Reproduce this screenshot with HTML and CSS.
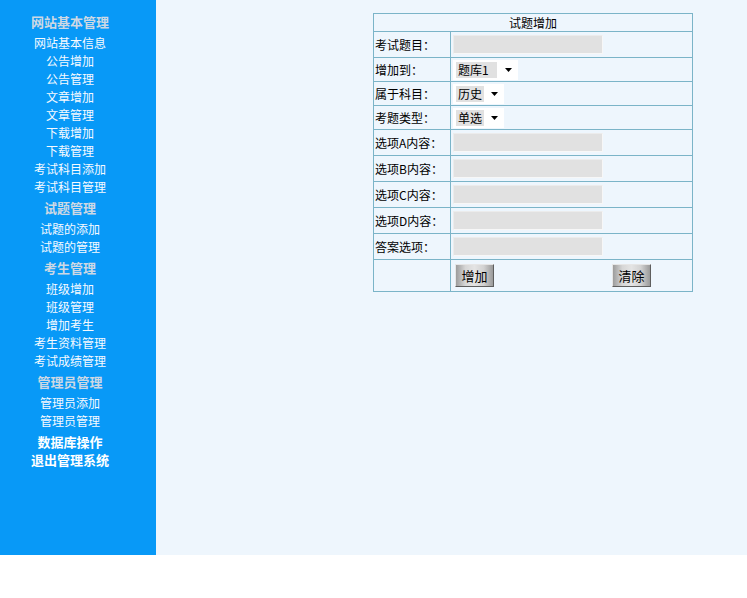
FILE: index.html
```html
<!DOCTYPE html>
<html lang="zh-CN">
<head>
<meta charset="utf-8">
<title>试题增加</title>
<link rel="stylesheet" href="styles.css">
</head>
<body>
<div class="page">
  <aside class="sidebar">
    <nav class="menu">
      <div class="menu-head">网站基本管理</div>
      <a class="menu-item">网站基本信息</a>
      <a class="menu-item">公告增加</a>
      <a class="menu-item">公告管理</a>
      <a class="menu-item">文章增加</a>
      <a class="menu-item">文章管理</a>
      <a class="menu-item">下载增加</a>
      <a class="menu-item">下载管理</a>
      <a class="menu-item">考试科目添加</a>
      <a class="menu-item">考试科目管理</a>
      <div class="menu-head">试题管理</div>
      <a class="menu-item">试题的添加</a>
      <a class="menu-item">试题的管理</a>
      <div class="menu-head">考生管理</div>
      <a class="menu-item">班级增加</a>
      <a class="menu-item">班级管理</a>
      <a class="menu-item">增加考生</a>
      <a class="menu-item">考生资料管理</a>
      <a class="menu-item">考试成绩管理</a>
      <div class="menu-head">管理员管理</div>
      <a class="menu-item">管理员添加</a>
      <a class="menu-item">管理员管理</a>
      <a class="menu-strong menu-gap">数据库操作</a>
      <a class="menu-strong">退出管理系统</a>
    </nav>
  </aside>
  <main class="main">
    <table class="form-table">
      <tr class="row-head"><th colspan="2">试题增加</th></tr>
      <tr class="row-in"><td class="label">考试题目：</td><td class="value"><span class="field"></span></td></tr>
      <tr class="row-sel"><td class="label">增加到：</td><td class="value"><span class="sel sel-wide"><span class="sel-val">题库1</span><svg class="arrow" width="7" height="4" viewBox="0 0 7 4"><path d="M0 0H7L3.5 4Z" fill="#000"/></svg></span></td></tr>
      <tr class="row-sel"><td class="label">属于科目：</td><td class="value"><span class="sel"><span class="sel-val">历史</span><svg class="arrow" width="7" height="4" viewBox="0 0 7 4"><path d="M0 0H7L3.5 4Z" fill="#000"/></svg></span></td></tr>
      <tr class="row-sel"><td class="label">考题类型：</td><td class="value"><span class="sel"><span class="sel-val">单选</span><svg class="arrow" width="7" height="4" viewBox="0 0 7 4"><path d="M0 0H7L3.5 4Z" fill="#000"/></svg></span></td></tr>
      <tr class="row-in"><td class="label">选项A内容：</td><td class="value"><span class="field"></span></td></tr>
      <tr class="row-in"><td class="label">选项B内容：</td><td class="value"><span class="field"></span></td></tr>
      <tr class="row-in"><td class="label">选项C内容：</td><td class="value"><span class="field"></span></td></tr>
      <tr class="row-in"><td class="label">选项D内容：</td><td class="value"><span class="field"></span></td></tr>
      <tr class="row-in"><td class="label">答案选项：</td><td class="value"><span class="field"></span></td></tr>
      <tr class="row-btn"><td class="label"></td><td class="value"><div class="btns"><button class="btn">增加</button><button class="btn">清除</button></div></td></tr>
    </table>
  </main>
</div>
</body>
</html>
```

FILE: styles.css
```css
html, body {
  margin: 0;
  padding: 0;
  background: #ffffff;
  font-family: "Noto Sans CJK SC", "Noto Sans", sans-serif;
  font-size: 12px;
}

.page {
  display: flex;
  height: 555px;
}

.sidebar {
  width: 156px;
  flex: none;
  background: #0899f7;
  padding-top: 10px;
  box-sizing: border-box;
}

.menu {
  width: 140px;
  display: flex;
  flex-direction: column;
  align-items: center;
}

.menu-head {
  height: 24px;
  line-height: 24px;
  font-size: 13px;
  font-weight: bold;
  color: #cdd8e4;
}

.menu-item {
  height: 18px;
  line-height: 18px;
  font-size: 12px;
  color: #f6faff;
  cursor: pointer;
}

.menu-strong {
  height: 18px;
  line-height: 18px;
  font-size: 13px;
  font-weight: bold;
  color: #ffffff;
  cursor: pointer;
}

.menu-gap {
  margin-top: 3px;
}

.main {
  flex: 1;
  background: #eef6fd;
  padding: 13px 0 0 217px;
}

.form-table {
  width: 320px;
  border-collapse: collapse;
  font-size: 12px;
  color: #000;
}

.form-table th,
.form-table td {
  border: 1px solid #7bb4c8;
  padding: 0;
  vertical-align: middle;
}

.form-table th {
  font-weight: normal;
  text-align: center;
  height: 17px;
  line-height: 17px;
}

.row-in td { height: 25px; }
.row-sel td { height: 23px; }
.row-btn td { height: 31px; }

.label {
  width: 75px;
  padding-left: 1px !important;
  white-space: nowrap;
}

.value {
  padding-left: 2px !important;
}

.field {
  display: block;
  width: 148px;
  height: 17px;
  background: #e1e1e1;
  border: 1px solid #ececec;
  border-right-color: #f7f7f7;
  border-bottom-color: #f7f7f7;
}

.sel {
  display: flex;
  align-items: center;
  width: 51px;
  height: 20px;
  background: #ffffff;
  box-sizing: border-box;
  padding-left: 3px;
}

.sel-wide {
  width: 65px;
}

.sel-val {
  background: #e1e1e1;
  height: 16px;
  line-height: 16px;
  padding: 0 2px;
  font-size: 12px;
}

.sel-wide .sel-val {
  width: 37px;
}

.arrow {
  margin-left: auto;
  margin-right: 6px;
}

.btns {
  display: flex;
  justify-content: space-between;
  width: 196px;
  padding-left: 2px;
}

.btn {
  width: 39px;
  height: 23px;
  padding: 0;
  font-family: "Noto Sans CJK SC", "Noto Sans", sans-serif;
  font-size: 13px;
  color: #000;
  background: linear-gradient(to right, #9c9c9c 0%, #d6d6d6 25%, #e4e4e4 50%, #d2d2d2 75%, #9a9a9a 100%);
  border: 1px solid;
  border-color: #e6e6e6 #5e5e5e #5e5e5e #e6e6e6;
  cursor: pointer;
}
```
